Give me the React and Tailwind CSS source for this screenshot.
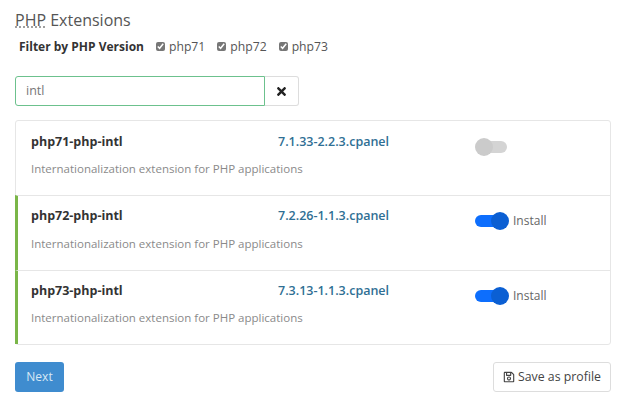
import React from 'react';
import { FaTimes, FaRegSave } from 'react-icons/fa';

const versions = ['php71', 'php72', 'php73'];

const rows = [
  { name: 'php71-php-intl', version: '7.1.33-2.2.3.cpanel', on: false },
  { name: 'php72-php-intl', version: '7.2.26-1.1.3.cpanel', on: true },
  { name: 'php73-php-intl', version: '7.3.13-1.1.3.cpanel', on: true },
];

const Toggle = ({ on }) => {
  if (on) {
    return (
      <div className="relative w-[34px] h-[18px] flex items-center">
        <div className="w-[29px] h-[12px] rounded-full bg-[#0d6efd]" />
        <div className="absolute right-0 top-0 w-[18px] h-[18px] rounded-full bg-[#0b5fd3]" />
      </div>
    );
  }
  return (
    <div className="relative w-[33px] h-[18px] flex items-center">
      <div className="w-[28px] h-[12px] ml-[4px] rounded-full bg-[#d4d4d4]" />
      <div className="absolute left-0 top-0 w-[18px] h-[18px] rounded-full bg-[#cbcbcb]" />
    </div>
  );
};

const Row = ({ row, first }) => (
  <div
    className={`flex h-[74.3px] ${first ? 'pl-[15px] pt-[12px]' : 'border-t border-[#e6e6e6] pt-[11.1px]'} ${
      row.on ? 'border-l-[3px] border-l-[#7ab648] -ml-px pl-[13px]' : ''
    }`}
  >
    <div className="w-[247px] shrink-0">
      <div className="text-[12.5px] leading-[18px] font-bold text-[#333333]">{row.name}</div>
      <div className={`${first ? 'mt-[9px]' : 'mt-[9.5px]'} text-[11.5px] leading-[18px] text-[#8a8a8a] whitespace-nowrap`}>
        Internationalization extension for PHP applications
      </div>
    </div>
    <div className="w-[197px] shrink-0 text-[12.5px] leading-[18px] font-semibold text-[#2f6f94]">
      {row.version}
    </div>
    <div className="flex items-start gap-[4px] pt-[5px]">
      <Toggle on={row.on} />
      {row.on && <span className="text-[12px] leading-[18px] text-[#666666]">Install</span>}
    </div>
  </div>
);

export default function App() {
  return (
    <div className="w-[640px] h-[411px] bg-white overflow-hidden px-[15px] pt-[9px] font-['Open_Sans',sans-serif]">
      <h1 className="text-[16px] leading-[22px] font-normal text-[#555555]">
        <span className="underline decoration-dotted decoration-[#888888]">PHP</span> Extensions
      </h1>

      <div className="flex items-center mt-[5px] ml-[4px] h-[22px]">
        <span className="text-[12px] font-bold text-[#333333] mr-[12px]">Filter by PHP Version</span>
        {versions.map((v) => (
          <label key={v} className="flex items-center mr-[12px] text-[12.2px] text-[#555555]">
            <input type="checkbox" defaultChecked className="w-[9px] h-[9px] mr-[4px] accent-[#777777]" />
            {v}
          </label>
        ))}
      </div>

      <div className="flex mt-[18px] h-[30px]">
        <div className="w-[250px] border border-[#6cc18d] rounded-l-[3px] pl-[10px] flex items-center text-[12.5px] text-[#777777]">
          intl
        </div>
        <div className="w-[34px] border border-l-0 border-[#dddddd] rounded-r-[3px] flex items-center justify-center text-[#222222]">
          <FaTimes className="text-[13px]" />
        </div>
      </div>

      <div className="mt-[14px] w-[596px] border border-[#e6e6e6] rounded-[3px]">
        {rows.map((row, i) => (
          <Row key={row.name} row={row} first={i === 0} />
        ))}
      </div>

      <div className="flex justify-between w-[596px] mt-[17.1px]">
        <button className="w-[49px] h-[30px] rounded-[3px] bg-[#3f8ccf] text-[12px] text-[#d8e8f5]">Next</button>
        <button className="w-[118px] h-[30px] rounded-[3px] border border-[#dddddd] flex items-center justify-center gap-[3px] text-[12.3px] text-[#444444]">
          <FaRegSave className="text-[12px]" />
          Save as profile
        </button>
      </div>
    </div>
  );
}
